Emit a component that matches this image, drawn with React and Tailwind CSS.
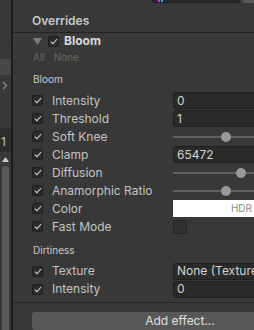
import React from 'react';

const bloomRows = [
  { label: 'Intensity', type: 'field', value: '0' },
  { label: 'Threshold', type: 'field', value: '1' },
  { label: 'Soft Knee', type: 'slider', pos: 0.5 },
  { label: 'Clamp', type: 'field', value: '65472' },
  { label: 'Diffusion', type: 'slider', pos: 0.667 },
  { label: 'Anamorphic Ratio', type: 'slider', pos: 0.5 },
  { label: 'Color', type: 'color' },
  { label: 'Fast Mode', type: 'toggle' },
];

const dirtRows = [
  { label: 'Texture', type: 'field', value: 'None (Texture)' },
  { label: 'Intensity', type: 'field', value: '0' },
];

const Check = () => (
  <svg width="8" height="7" viewBox="0 0 8 7" fill="none">
    <path d="M0.8 3.6 L3 5.7 L7.2 1" stroke="#cfcfcf" strokeWidth="1.1" />
  </svg>
);

const CheckBox = () => (
  <div className="w-[11px] h-[11px] shrink-0 rounded-[2px] bg-[#2b2b2b] border border-[#1f1f1f] flex items-center justify-center">
    <Check />
  </div>
);

const Field = ({ value }) => (
  <div className="flex-1 h-[17px] rounded-[3px] bg-[#2a2a2a] border border-[#202020] pl-[3px] flex items-center text-[12px] text-[#d2d2d2] whitespace-nowrap overflow-hidden">
    {value}
  </div>
);

// slider track + the float field that sits past the visible edge
const Slider = ({ pos }) => (
  <div className="flex-1 flex items-center gap-[5px]">
    <div className="flex-1 relative h-[18px] flex items-center">
      <div className="w-full h-[2px] bg-[#5e5e5e]" />
      <div
        className="absolute top-[4px] w-[10px] h-[10px] rounded-full bg-[#999999]"
        style={{ left: `calc(${pos * 100}% - ${pos * 10}px)` }}
      />
    </div>
    <div className="w-[45px] h-[17px] rounded-[3px] bg-[#2a2a2a] border border-[#202020]" />
  </div>
);

const Row = ({ row }) => (
  <div className="h-[18px] flex items-center">
    <div className="w-[141px] shrink-0 flex items-center gap-[9px]">
      <CheckBox />
      <span className="text-[12px] text-[#c4c4c4] whitespace-nowrap">{row.label}</span>
    </div>
    {row.type === 'field' && <Field value={row.value} />}
    {row.type === 'slider' && <Slider pos={row.pos} />}
    {row.type === 'color' && (
      <div className="w-[83px] h-[17px] bg-white flex items-center justify-end pr-[4px] text-[10px] text-[#8a8a8a]">
        HDR
      </div>
    )}
    {row.type === 'toggle' && (
      <div className="w-[14px] h-[14px] rounded-[2px] bg-[#303030] border border-[#262626]" />
    )}
  </div>
);

export default function App() {
  return (
    <div
      className="w-[254px] h-[330px] overflow-hidden flex bg-[#383838]"
      style={{ fontFamily: 'Inter, "Noto Sans", sans-serif' }}
    >
      {/* Left strip */}
      <div className="w-[11px] shrink-0 flex flex-col bg-[#383838]">
        <div className="h-[59px]" />
        <div className="h-[16px] bg-[#474747]" />
        <div className="h-[20px] flex items-center pl-[2px]">
          <svg width="6" height="9" viewBox="0 0 6 9" fill="none">
            <path d="M1 1 L4.5 4.5 L1 8" stroke="#8a8a8a" strokeWidth="1.3" />
          </svg>
        </div>
        <div className="h-[33px]" />
        <div className="h-[24px] bg-[#2c2c2c] flex items-center pl-[1px] pt-[3px] text-[12px] text-[#c4c4c4]">1</div>
        <div className="h-[14px] flex items-center justify-center pr-[1px]">
          <svg width="7" height="5" viewBox="0 0 7 5"><path d="M0 5 L3.5 0 L7 5 Z" fill="#c8c8c8" /></svg>
        </div>
        <div className="flex-1 mx-[2px] rounded-t-[4px] bg-[#5a5a5a]" />
      </div>
      <div className="w-[2px] shrink-0 bg-[#1c1c1c]" />

      {/* Main inspector */}
      <div className="w-[330px] shrink-0 flex flex-col">
        <div className="h-[3px] flex">
          <div className="ml-[139px] w-[88px] h-[3px] rounded-b-[3px] bg-[#282828] border-x border-b border-[#1e1e1e] flex items-start pl-[5px] gap-[1px]">
            <div className="w-[2px] h-[2px] bg-[#c040c0]" />
            <div className="w-[2px] h-[2px] bg-[#30a0e0]" />
          </div>
          <div className="ml-[3px] w-[20px] h-[3px] bg-[#585858]" />
        </div>
        <div className="mt-[10px] h-[16px] pl-[19px] flex items-center text-[12px] font-semibold text-[#c8c8c8]">
          Overrides
        </div>
        <div className="mt-[3px] h-px bg-[#232323]" />
        <div className="h-[17px] bg-[#3a3a3a] pl-[20px] flex items-center">
          <svg width="9" height="7" viewBox="0 0 9 7"><path d="M0 0 L9 0 L4.5 7 Z" fill="#7a7a7a" /></svg>
          <div className="ml-[6px]">
            <CheckBox />
          </div>
          <span className="ml-[5px] text-[12px] font-bold text-[#dadada]">Bloom</span>
        </div>
        <div className="h-[17px] pl-[20px] flex items-center gap-[9px] text-[10px] text-[#666666]">
          <span>All</span>
          <span>None</span>
        </div>
        <div className="h-[27px] pl-[20px] pt-[2px] flex items-center text-[10px] text-[#c8c8c8]">Bloom</div>
        <div className="pl-[19px] pr-[15px] flex flex-col">
          {bloomRows.map((row) => (
            <Row key={row.label} row={row} />
          ))}
        </div>
        <div className="h-[28px] pt-[3px] pl-[20px] flex items-center text-[10px] text-[#c8c8c8]">Dirtiness</div>
        <div className="pl-[19px] pr-[15px] flex flex-col">
          {dirtRows.map((row, i) => (
            <Row key={i} row={row} />
          ))}
        </div>
        <div className="mt-[4px] h-px bg-[#232323]" />
        <div className="mt-[9px] ml-[19px] mr-[15px] h-[18px] rounded-[3px] bg-[#585858] flex items-center justify-center text-[12px] text-[#e0e0e0]">
          Add effect...
        </div>
      </div>
    </div>
  );
}
